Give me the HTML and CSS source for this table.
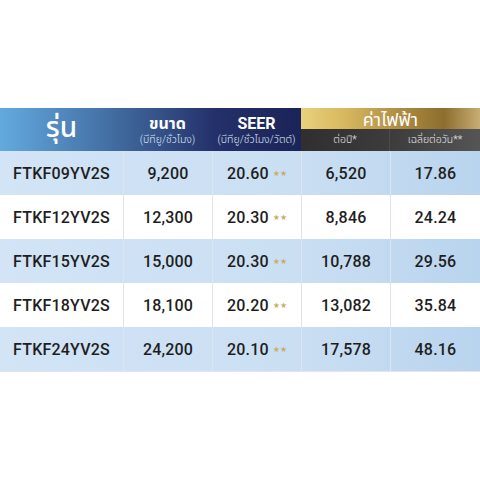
FILE: index.html
```html
<!DOCTYPE html>
<html lang="th">
<head>
<meta charset="utf-8">
<link rel="stylesheet" href="styles.css">
</head>
<body>
<div class="table">
  <div class="head">
    <div class="hc h-model">รุ่น</div>
    <div class="hc h-size"><span class="ht">ขนาด</span><span class="hs">(บีทียู/ชั่วโมง)</span></div>
    <div class="hc h-seer"><span class="ht">SEER</span><span class="hs">(บีทียู/ชั่วโมง/วัตต์)</span></div>
    <div class="h-cost">ค่าไฟฟ้า</div>
    <div class="h-sub h-year">ต่อปี*</div>
    <div class="h-sub h-day">เฉลี่ยต่อวัน**</div>
  </div>
  <div class="row blue"><div class="c first">FTKF09YV2S</div><div class="c">9,200</div><div class="c">20.60<span class="st">★★</span></div><div class="c">6,520</div><div class="c">17.86</div></div>
  <div class="row"><div class="c first">FTKF12YV2S</div><div class="c">12,300</div><div class="c">20.30<span class="st">★★</span></div><div class="c">8,846</div><div class="c">24.24</div></div>
  <div class="row blue"><div class="c first">FTKF15YV2S</div><div class="c">15,000</div><div class="c">20.30<span class="st">★★</span></div><div class="c">10,788</div><div class="c">29.56</div></div>
  <div class="row"><div class="c first">FTKF18YV2S</div><div class="c">18,100</div><div class="c">20.20<span class="st">★★</span></div><div class="c">13,082</div><div class="c">35.84</div></div>
  <div class="row blue last"><div class="c first">FTKF24YV2S</div><div class="c">24,200</div><div class="c">20.10<span class="st">★★</span></div><div class="c">17,578</div><div class="c">48.16</div></div>
</div>
</body>
</html>
```
FILE: styles.css
```css
html, body {
  margin: 0;
  padding: 0;
  background: #ffffff;
}
body {
  width: 480px;
  height: 480px;
  font-family: "Roboto", "Noto Sans Thai", "Noto Sans", "DejaVu Sans", sans-serif;
  color: #1e1e1e;
}
.table {
  padding-top: 108px;
}
.head {
  display: grid;
  grid-template-columns: 123px 89px 89px 89px 90px;
  grid-template-rows: 21px 22px;
  background: linear-gradient(to right, #63aadf 0px, #3f679c 123px, #24306a 215px, #1b2458 301px, #1b2458 480px);
  color: #ffffff;
}
.hc {
  grid-row: 1 / 3;
  display: flex;
  flex-direction: column;
  align-items: center;
  justify-content: center;
}
.h-model {
  grid-column: 1;
  font-size: 28px;
  font-weight: 500;
  padding-bottom: 3px;
}
.h-size { grid-column: 2; }
.h-seer { grid-column: 3; }
.ht {
  font-size: 16px;
  font-weight: 700;
  line-height: 19px;
}
.hs {
  font-size: 10.5px;
  line-height: 13px;
  font-weight: 300;
  color: #dfe6f2;
}
.h-cost {
  grid-column: 4 / 6;
  grid-row: 1;
  display: flex;
  align-items: center;
  justify-content: center;
  font-size: 18px;
  line-height: 21px;
  padding-top: 2px;
  font-weight: 400;
  background: linear-gradient(to right, #e9d17c 0%, #d6b75e 25%, #a8863e 60%, #8d6e2e 80%, #c7ad74 100%);
}
.h-sub {
  grid-row: 2;
  display: flex;
  align-items: center;
  justify-content: center;
  font-size: 10.5px;
  font-weight: 300;
  color: #e8e8e8;
}
.h-year {
  grid-column: 4;
  background: linear-gradient(to right, #2f2f2f, #3c3c3c);
  border-right: 1px solid #4a4a4a;
}
.h-day {
  grid-column: 5;
  background: linear-gradient(to right, #3c3c3c, #555555);
}
.row {
  display: grid;
  grid-template-columns: 123px 89px 89px 89px 90px;
  height: 44px;
  background: #ffffff;
}
.row.blue {
  background: linear-gradient(to right, #d2e4f6 0%, #cbdff3 60%, #b9d4ee 100%);
}
.row.last {
  border-bottom: 1px solid #dfe6ee;
}
.c {
  display: flex;
  align-items: center;
  justify-content: center;
  font-size: 16px;
  font-weight: 500;
  border-left: 1px solid #dde4ec;
  letter-spacing: 0.2px;
}
.c.first {
  border-left: none;
}
.st {
  font-size: 8px;
  color: #c9ac66;
  margin-left: 4px;
  letter-spacing: 0;
}
```
